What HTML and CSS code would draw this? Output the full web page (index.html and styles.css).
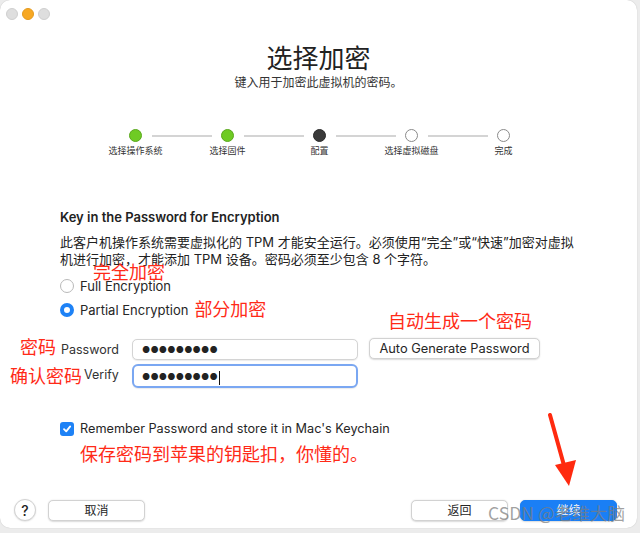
FILE: index.html
```html
<!DOCTYPE html>
<html>
<head>
<meta charset="utf-8">
<link rel="stylesheet" href="styles.css">
</head>
<body>
<div class="window">
  <div class="titlebar">
    <span class="light gray"></span>
    <span class="light orange"></span>
    <span class="light gray"></span>
  </div>
  <div class="header">
    <h1 class="title">选择加密</h1>
    <p class="subtitle">键入用于加密此虚拟机的密码。</p>
  </div>
  <div class="steps">
    <div class="step"><span class="dot done"></span><span class="step-label">选择操作系统</span></div>
    <div class="line"></div>
    <div class="step"><span class="dot done"></span><span class="step-label">选择固件</span></div>
    <div class="line"></div>
    <div class="step"><span class="dot current"></span><span class="step-label">配置</span></div>
    <div class="line"></div>
    <div class="step"><span class="dot"></span><span class="step-label">选择虚拟磁盘</span></div>
    <div class="line"></div>
    <div class="step"><span class="dot"></span><span class="step-label">完成</span></div>
  </div>
  <div class="content">
    <h2 class="section-title">Key in the Password for Encryption</h2>
    <p class="desc">此客户机操作系统需要虚拟化的 TPM 才能安全运行。必须使用“完全”或“快速”加密对虚拟机进行加密，才能添加 TPM 设备。密码必须至少包含 8 个字符。</p>
    <div class="radios">
      <label class="radio-row"><span class="radio"></span><span>Full Encryption</span><span class="note note-full">完全加密</span></label>
      <label class="radio-row"><span class="radio on"></span><span>Partial Encryption</span><span class="note note-inline">部分加密</span></label>
    </div>
    <div class="fields">
      <span class="note note-auto">自动生成一个密码</span>
      <div class="field-row">
        <span class="field-label"><span class="note note-pw">密码</span>Password</span>
        <div class="input">●●●●●●●●●</div>
        <button class="btn btn-auto">Auto Generate Password</button>
      </div>
      <div class="field-row">
        <span class="field-label"><span class="note note-verify">确认密码</span>Verify</span>
        <div class="input focus">●●●●●●●●●<span class="caret"></span></div>
      </div>
    </div>
    <label class="check-row"><span class="checkbox"><svg width="10" height="10" viewBox="0 0 10 10"><path d="M2 5.2 L4.2 7.4 L8.2 2.4" fill="none" stroke="#fff" stroke-width="1.8" stroke-linecap="round" stroke-linejoin="round"/></svg></span><span>Remember Password and store it in Mac's Keychain</span></label>
    <p class="note note-keychain">保存密码到苹果的钥匙扣，你懂的。</p>
  </div>
  <div class="footer">
    <div class="footer-left">
      <button class="help">?</button>
      <button class="btn btn-foot">取消</button>
    </div>
    <div class="footer-right">
      <button class="btn btn-foot">返回</button>
      <button class="btn btn-foot primary">继续</button>
    </div>
  </div>
  <svg class="arrow" width="40" height="80" viewBox="0 0 40 80">
    <path d="M5 2 L20 56" stroke="#ff2a0f" stroke-width="4" stroke-linecap="round"/>
    <path d="M10 52 L31 47 L24 73 Z" fill="#ff2a0f"/>
  </svg>
  <div class="watermark">CSDN @老维大脑</div>
</div>
</body>
</html>
```

FILE: styles.css
```css
* { box-sizing: border-box; }
html, body { margin: 0; padding: 0; }
body {
  width: 640px;
  height: 533px;
  background: #ececec;
  font-family: "Inter", "Noto Sans CJK SC", sans-serif;
  color: #262626;
  overflow: hidden;
}
.window {
  position: relative;
  width: 637px;
  height: 528px;
  background: #fff;
  border-radius: 10px;
  box-shadow: 0 0 1px rgba(0,0,0,0.25);
  display: flex;
  flex-direction: column;
}
.titlebar {
  display: flex;
  gap: 4px;
  padding: 8px 0 0 6px;
  height: 24px;
}
.light {
  width: 12px;
  height: 12px;
  border-radius: 50%;
  border: 1px solid #cfcfcf;
  background: #dedede;
}
.light.orange { background: #f7a823; border-color: #e49a1e; }
.header {
  text-align: center;
  margin-top: 18px;
}
.title {
  margin: 0;
  font-family: "Noto Sans CJK SC", sans-serif;
  font-weight: 400;
  font-size: 26px;
  line-height: 30px;
  color: #222;
}
.subtitle {
  margin: 2px 0 0;
  font-family: "Noto Sans CJK SC", sans-serif;
  font-size: 12px;
  line-height: 16px;
  color: #333;
}
.steps {
  display: flex;
  align-items: flex-start;
  justify-content: center;
  margin-top: 39px;
  padding-left: 2px;
}
.step {
  flex: none;
  width: 40px;
  display: flex;
  flex-direction: column;
  align-items: center;
}
.dot {
  width: 13px;
  height: 13px;
  border-radius: 50%;
  border: 1px solid #8a8a8a;
  background: #fff;
}
.dot.done { background: #6fcb24; border-color: #5aa81d; }
.dot.current { background: #3a3a3a; border-color: #2a2a2a; }
.step-label {
  margin-top: 3px;
  font-family: "Noto Sans CJK SC", sans-serif;
  font-size: 9px;
  line-height: 12px;
  white-space: nowrap;
  color: #333;
}
.line {
  width: 60px;
  height: 2px;
  background: #d4d4d4;
  margin: 6px -4px 0;
  flex: none;
}
.content {
  padding: 0 60px;
  margin-top: 52px;
  position: relative;
}
.section-title {
  margin: 0;
  font-size: 13px;
  font-weight: 600;
  line-height: 16px;
  color: #222;
}
.desc {
  margin: 9px 0 0;
  font-size: 13px;
  line-height: 17px;
  color: #222;
  width: 522px;
}
.radios {
  margin-top: 10px;
  display: flex;
  flex-direction: column;
  gap: 7px;
}
.radio-row {
  display: flex;
  align-items: center;
  gap: 6px;
  font-size: 13px;
  line-height: 16px;
  position: relative;
}
.radio {
  width: 14px;
  height: 14px;
  border-radius: 50%;
  border: 1px solid #b9b9b9;
  background: #fff;
}
.radio.on {
  border: 4px solid #1e82f6;
  background: #fff;
}
.note {
  font-family: "Noto Sans CJK SC", sans-serif;
  color: #ff2a17;
  font-size: 18px;
  line-height: 22px;
  position: absolute;
  white-space: nowrap;
}
.note-full { left: 33px; top: -18px; }
.note-inline { position: static; margin-left: 0; margin-top: -4px; }
.fields {
  margin-top: 20px;
  display: flex;
  flex-direction: column;
  gap: 4px;
  position: relative;
}
.note-auto { left: 328px; top: -30px; }
.field-row {
  display: flex;
  align-items: center;
  position: relative;
}
.field-label {
  width: 72px;
  font-size: 12.5px;
  line-height: 14px;
  color: #333;
  padding-left: 1px;
  position: relative;
}
.field-row:last-child .field-label { padding-left: 24px; margin-top: -3px; }
.note-pw { left: -40px; top: -8px; }
.note-verify { left: -50px; top: -4px; }
.input {
  width: 226px;
  height: 21px;
  border: 1px solid #d4d4d4;
  border-radius: 5px;
  background: #fff;
  font-size: 9px;
  letter-spacing: 0.2px;
  padding: 3px 0 0 9px;
  line-height: 14px;
  color: #222;
  box-shadow: 0 0.5px 1px rgba(0,0,0,0.08);
}
.input.focus {
  height: 24px;
  border: 2px solid #7aa7f2;
  border-radius: 6px;
  padding: 4px 0 0 8px;
}
.caret {
  display: inline-block;
  width: 1px;
  height: 14px;
  background: #111;
  vertical-align: middle;
  margin-left: 1px;
}
.btn {
  font-family: "Inter", "Noto Sans CJK SC", sans-serif;
  background: #fff;
  border: 1px solid #d2d2d2;
  border-radius: 5px;
  box-shadow: 0 0.5px 1.5px rgba(0,0,0,0.15);
  color: #262626;
  padding: 0;
}
.btn-auto {
  margin-left: 11px;
  width: 171px;
  height: 21px;
  font-size: 12.8px;
  margin-top: -2px;
}
.check-row {
  display: flex;
  align-items: center;
  gap: 6px;
  margin-top: 33px;
  font-size: 12.7px;
  line-height: 16px;
  color: #262626;
}
.checkbox {
  width: 14px;
  height: 14px;
  border-radius: 3px;
  background: #1e82f6;
  display: flex;
  align-items: center;
  justify-content: center;
}
.note-keychain {
  position: static;
  margin: 5px 0 0 20px;
}
.footer {
  margin-top: auto;
  display: flex;
  justify-content: space-between;
  align-items: center;
  padding: 0 20px 7px 14px;
}
.footer-left, .footer-right { display: flex; align-items: center; gap: 12px; }
.help {
  width: 22px;
  height: 22px;
  border-radius: 50%;
  border: 1px solid #d2d2d2;
  background: #fff;
  font-family: "Inter", sans-serif;
  font-size: 14px;
  font-weight: 500;
  padding: 0;
  color: #222;
  box-shadow: 0 0.5px 1.5px rgba(0,0,0,0.15);
}
.btn-foot {
  width: 97px;
  height: 21px;
  font-family: "Noto Sans CJK SC", sans-serif;
  font-size: 12px;
  line-height: 18px;
}
.btn-foot.primary {
  background: #1a7ff5;
  border-color: #1a7ff5;
  color: #fff;
}
.arrow {
  position: absolute;
  left: 545px;
  top: 413px;
}
.watermark {
  position: absolute;
  left: 488px;
  top: 502px;
  font-family: "Noto Sans CJK SC", sans-serif;
  font-size: 17.6px;
  line-height: 22px;
  color: rgba(125,125,125,0.72);
  white-space: nowrap;
}
```
